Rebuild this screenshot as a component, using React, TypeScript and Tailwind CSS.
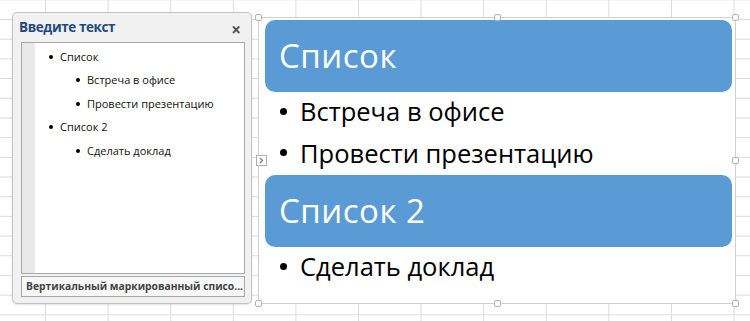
import React from 'react';

interface PaneItem {
  text: string;
  level: number;
}

const paneItems: PaneItem[] = [
  { text: 'Список', level: 0 },
  { text: 'Встреча в офисе', level: 1 },
  { text: 'Провести презентацию', level: 1 },
  { text: 'Список 2', level: 0 },
  { text: 'Сделать доклад', level: 1 },
];

const groups = [
  { title: 'Список', items: ['Встреча в офисе', 'Провести презентацию'] },
  { title: 'Список 2', items: ['Сделать доклад'] },
];

const Handle: React.FC<{ className: string }> = ({ className }) => (
  <div className={`absolute w-[7px] h-[7px] rounded-[2px] bg-white border border-[#b4b4b4] ${className}`} />
);

const TextPane: React.FC = () => (
  <div className="w-[240px] h-[292px] flex flex-col rounded-[5px] border border-[#c3c3c3] bg-[#f1f1f1] shadow-[0_1px_2px_rgba(0,0,0,0.12)] pl-[8px] pr-[6px]">
    <div className="h-[29px] flex items-center justify-between -ml-[2px] pr-[4px]">
      <span className="text-[13.5px] font-bold text-[#1f4a7c] tracking-[-0.4px]">Введите текст</span>
      <span className="text-[17px] leading-none font-bold text-[#555] mt-[4px]">×</span>
    </div>
    <div className="h-[232px] flex border border-[#a8a8a8] bg-white">
      <div className="w-[13px] bg-[#e9e9e9]" />
      <ul className="flex flex-col pt-[2px]">
        {paneItems.map((item, i) => (
          <li
            key={i}
            className={`h-[23.5px] flex items-center text-[11px] text-[#111] ${item.level === 0 ? 'pl-[14px]' : 'pl-[41px]'}`}
          >
            <span className="w-[4px] h-[4px] rounded-full bg-black mr-[7px]" />
            {item.text}
          </li>
        ))}
      </ul>
    </div>
    <div className="mt-[2px] h-[21px] flex items-center border border-[#a8a8a8] bg-[#f7f7f7] px-[4px]">
      <span className="text-[10.3px] font-bold text-[#444] whitespace-nowrap">
        Вертикальный маркированный списо...
      </span>
    </div>
  </div>
);

const SmartArt: React.FC = () => (
  <div className="relative mt-[5px] w-[478px] h-[287px] border border-[#d0d0d0] bg-white pl-[6px] pr-[3px] pt-[2px]">
    <Handle className="-left-[4px] -top-[4px]" />
    <Handle className="left-[235px] -top-[4px]" />
    <Handle className="-right-[4px] -top-[4px]" />
    <Handle className="-right-[4px] top-[139px]" />
    <Handle className="-left-[4px] -bottom-[4px]" />
    <Handle className="left-[235px] -bottom-[4px]" />
    <Handle className="-right-[4px] -bottom-[4px]" />
    <div className="absolute -left-[3px] top-[137px] w-[11px] h-[11px] bg-white border border-[#b0b0b0] flex items-center justify-center">
      <svg width="5" height="7" viewBox="0 0 5 7">
        <path d="M1 1l2.5 2.5L1 6" fill="none" stroke="#777" strokeWidth="1.2" />
      </svg>
    </div>
    {groups.map((g, gi) => (
      <div key={gi} className="flex flex-col">
        <div className="h-[72px] rounded-[10px] bg-[#5b9bd5] flex items-center pl-[14px]">
          <span className="text-[33px] text-white tracking-[0.5px]">{g.title}</span>
        </div>
        <ul className="flex flex-col">
          {g.items.map((it, ii) => (
            <li key={ii} className="h-[41.5px] flex items-center pb-[3px] text-[25.5px] text-black">
              <span className="w-[7px] h-[7px] rounded-full bg-black ml-[15px] mr-[13px]" />
              {it}
            </li>
          ))}
        </ul>
      </div>
    ))}
  </div>
);

export default function App() {
  return (
    <div
      className="w-[750px] h-[321px] overflow-hidden bg-white bg-[linear-gradient(to_right,#dcdcdc_1px,transparent_1px),linear-gradient(to_bottom,#dcdcdc_1px,transparent_1px)] bg-size-[62.6px_19.7px] bg-position-[45px_19px] flex items-start pl-[12px] pt-[12px] gap-[6px]"
      style={{ fontFamily: '"Open Sans", "Noto Sans", sans-serif' }}
    >
      <TextPane />
      <SmartArt />
    </div>
  );
}
